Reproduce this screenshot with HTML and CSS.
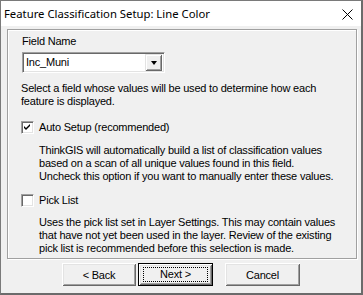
FILE: index.html
```html
<!DOCTYPE html>
<html lang="en">
<head>
  <meta charset="UTF-8">
  <title>Feature Classification Setup: Line Color</title>
  <link rel="stylesheet" href="styles.css">
</head>
<body>

  <div class="ventana">
    <div class="titulo">
      <span class="titulo-texto">Feature Classification Setup: Line Color</span>
      <svg class="cerrar" width="11" height="11" viewBox="0 0 11 11">
        <path d="M0.5 0.5 L10.5 10.5 M10.5 0.5 L0.5 10.5" stroke="#000" stroke-width="1" fill="none"/>
      </svg>
    </div>

    <div class="panel">
      <div class="etiqueta">Field Name</div>

      <div class="combo">
        <span class="combo-valor">Inc_Muni</span>
        <span class="combo-boton"><span class="flecha"></span></span>
      </div>

      <div class="ayuda">Select a field whose values will be used to determine how each<br>feature is displayed.</div>

      <div class="opcion opcion-auto">
        <span class="casilla">
          <svg width="7" height="7" viewBox="0 0 7 7">
            <path d="M0 2 L2 4 L6 0 L6 2 L2 6 L0 4 Z" fill="#000"/>
          </svg>
        </span>
        <span>Auto Setup (recommended)</span>
      </div>
      <div class="detalle detalle-auto">ThinkGIS will automatically build a list of classification values<br>based on a scan of all unique values found in this field.<br>Uncheck this option if you want to manually enter these values.</div>

      <div class="opcion opcion-lista">
        <span class="casilla"></span>
        <span>Pick List</span>
      </div>
      <div class="detalle detalle-lista">Uses the pick list set in Layer Settings. This may contain values<br>that have not yet been used in the layer. Review of the existing<br>pick list is recommended before this selection is made.</div>
    </div>

    <div class="botones">
      <button class="boton boton-atras">&lt; Back</button>
      <button class="boton boton-siguiente"><span class="foco">Next &gt;</span></button>
      <button class="boton boton-cancelar">Cancel</button>
    </div>
  </div>

</body>
</html>
```

FILE: styles.css
```css
* {
  box-sizing: border-box;
}

body {
  margin: 0;
  font-family: 'Liberation Sans', Arial, sans-serif;
  font-size: 11px;
  line-height: 13px;
  letter-spacing: -0.2px;
  color: #000;
  background: #6b6b6b;
}

.ventana {
  width: 363px;
  height: 295px;
  overflow: hidden;
  background-color: #f0f0f0;
  border-top: 1px solid #7a7a7a;
  border-left: 1px solid #7a7a7a;
  border-right: 2px solid #6b6b6b;
  border-bottom: 2px solid #6b6b6b;
}

.titulo {
  height: 25px;
  background-color: #fff;
  display: flex;
  align-items: center;
  padding-left: 3px;
}

.titulo-texto {
  font-family: 'Noto Sans', sans-serif;
  font-size: 11.3px;
  letter-spacing: 0;
  line-height: 16px;
}

.cerrar {
  margin-left: auto;
  margin-right: 8px;
  margin-top: 2px;
}

.panel {
  width: 350px;
  margin: 3px 0 0 6px;
  padding: 5px 10px 3px 14px;
  border: 1px solid #a0a0a0;
  box-shadow: inset 1px 1px #fff, 1px 1px #fff;
  white-space: nowrap;
}

.combo {
  width: 143px;
  height: 21px;
  margin-top: 4px;
  background-color: #fff;
  border-top: 1px solid #a0a0a0;
  border-left: 1px solid #a0a0a0;
  border-right: 1px solid #fff;
  border-bottom: 1px solid #fff;
  box-shadow: inset 1px 1px #696969, inset -1px -1px #e3e3e3;
  display: flex;
  align-items: center;
}

.combo-valor {
  padding-left: 3px;
}

.combo-boton {
  margin-left: auto;
  margin-right: 2px;
  width: 17px;
  height: 17px;
  background-color: #f0f0f0;
  box-shadow: inset 1px 1px #e3e3e3, inset -1px -1px #696969, inset 2px 2px #fff, inset -2px -2px #a0a0a0;
  display: flex;
  align-items: center;
  justify-content: center;
}

.flecha {
  width: 0;
  height: 0;
  margin-top: 1px;
  border-left: 3.5px solid transparent;
  border-right: 3.5px solid transparent;
  border-top: 4px solid #000;
}

.ayuda {
  margin-top: 9px;
  margin-left: -1px;
}

.opcion {
  display: flex;
  align-items: center;
  gap: 5px;
  margin-left: -1px;
  height: 13px;
}

.opcion-auto {
  margin-top: 13px;
}

.opcion-lista {
  margin-top: 11px;
}

.casilla {
  width: 13px;
  height: 13px;
  background-color: #fff;
  border-top: 1px solid #a0a0a0;
  border-left: 1px solid #a0a0a0;
  border-right: 1px solid #fff;
  border-bottom: 1px solid #fff;
  box-shadow: inset 1px 1px #696969, inset -1px -1px #e3e3e3;
  display: flex;
  align-items: center;
  justify-content: center;
}

.detalle {
  padding-left: 17px;
}

.detalle-auto {
  margin-top: 10px;
}

.detalle-lista {
  margin-top: 9px;
}

.botones {
  display: flex;
  margin-top: 4px;
  padding-left: 61px;
}

.boton {
  height: 23px;
  width: 75px;
  padding: 0;
  font-family: 'Liberation Sans', Arial, sans-serif;
  font-size: 11px;
  letter-spacing: -0.2px;
  color: #000;
  background-color: #f0f0f0;
  border: none;
  box-shadow: inset 1px 1px #fff, inset -1px -1px #696969, inset 2px 2px #e3e3e3, inset -2px -2px #a0a0a0;
}

.boton-atras {
  width: 74px;
}

.boton-siguiente {
  margin-left: 2px;
  border: 1px solid #000;
  display: flex;
  align-items: center;
  justify-content: center;
}

.foco {
  width: 65px;
  height: 15px;
  line-height: 13px;
  border: 1px dotted #000;
}

.boton-cancelar {
  margin-left: 12px;
}
```
